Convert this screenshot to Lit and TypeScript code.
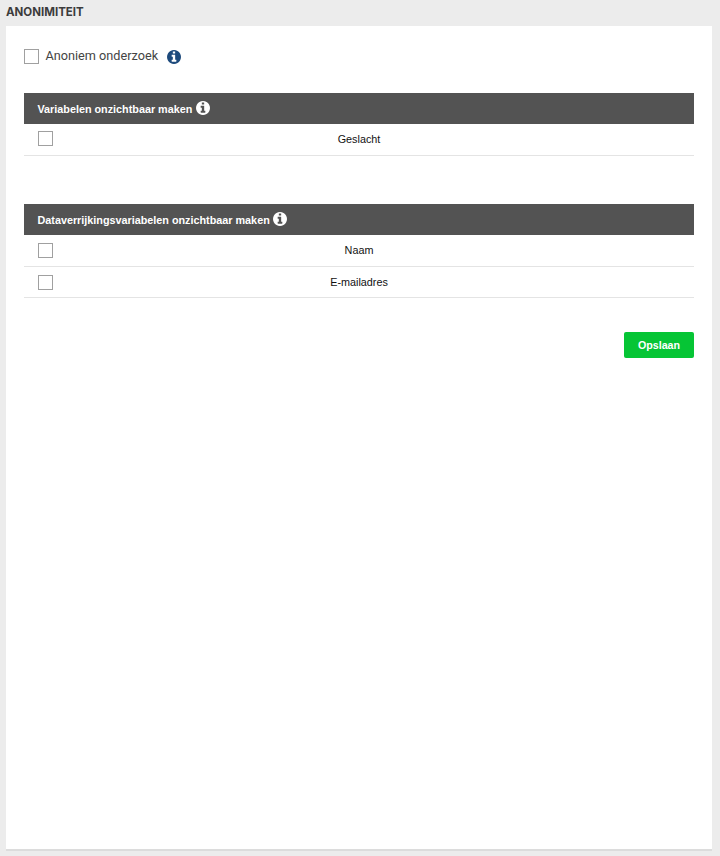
import { LitElement, html, css, svg } from 'lit';
import { customElement } from 'lit/decorators.js';

const infoIcon = (cls: string) => html`<svg class=${cls} viewBox="128 128 1536 1536">
  ${svg`<path fill="currentColor" d="M1152 1376v-160q0-14-9-23t-23-9h-96v-512q0-14-9-23t-23-9h-320q-14 0-23 9t-9 23v160q0 14 9 23t23 9h96v320h-96q-14 0-23 9t-9 23v160q0 14 9 23t23 9h448q14 0 23-9t9-23zm-128-896v-160q0-14-9-23t-23-9h-192q-14 0-23 9t-9 23v160q0 14 9 23t23 9h192q14 0 23-9t9-23zm640 416q0 209-103 385.5t-279.5 279.5-385.5 103-385.5-103-279.5-279.5-103-385.5 103-385.5 279.5-279.5 385.5-103 385.5 103 279.5 279.5 103 385.5z"></path>`}
</svg>`;

@customElement('app-root')
export class AppRoot extends LitElement {
  static styles = css`
    :host {
      display: block;
      height: 856px;
      background: #ececec;
      font-family: 'Liberation Sans', Arial, sans-serif;
      overflow: hidden;
    }
    .title {
      height: 26px;
      padding: 5px 0 0 6px;
      box-sizing: border-box;
      font-family: Inter, sans-serif;
      font-size: 11.5px;
      line-height: 14px;
      font-weight: 700;
      color: #3c3c3c;
    }
    .card {
      margin: 0 8px 0 6px;
      height: 823px;
      padding: 23px 18px 0;
      box-sizing: border-box;
      background: #fff;
      box-shadow: 0 2px 0 #dcdcdc;
    }
    .box {
      display: block;
      width: 15px;
      height: 15px;
      box-sizing: border-box;
      border: 1px solid #a0a0a0;
      background: #fff;
    }
    .anon {
      display: flex;
      align-items: center;
      height: 15px;
      color: #444;
      font-family: Roboto, sans-serif;
      font-size: 12.7px;
    }
    .anon span {
      margin-left: 6.5px;
      margin-top: -2px;
    }
    .anon-icon {
      width: 14px;
      height: 14px;
      margin-left: 9px;
      color: #1d4a7c;
    }
    .group {
      margin-top: 29px;
    }
    .group + .group {
      margin-top: 48px;
    }
    .head {
      display: flex;
      align-items: center;
      height: 31px;
      padding-left: 13.5px;
      background: #535353;
      color: #fff;
      font-size: 10.8px;
      font-weight: 700;
    }
    .head-icon {
      width: 14px;
      height: 14px;
      margin-left: 3.5px;
      margin-top: -1px;
      color: #fff;
    }
    .row {
      display: grid;
      grid-template-columns: 1fr auto 1fr;
      align-items: center;
      height: 32px;
      box-sizing: border-box;
      padding: 0 0 2px 14px;
      border-bottom: 1px solid #e4e4e4;
      color: #111;
      font-size: 10.8px;
    }
    .group + .group .box {
      margin-top: 2px;
    }
    .group + .group .row:last-child {
      height: 31px;
      padding-bottom: 1px;
    }
    .row .name {
      position: relative;
      left: -7px;
    }
    .actions {
      display: flex;
      justify-content: flex-end;
      margin-top: 34px;
    }
    button {
      width: 70px;
      height: 26px;
      padding: 0;
      border: none;
      border-radius: 2px;
      background: #06c535;
      color: #fff;
      font-family: 'Liberation Sans', Arial, sans-serif;
      font-size: 10.7px;
      font-weight: 700;
    }
  `;

  private group(title: string, rows: string[]) {
    return html`<div class="group">
      <div class="head">${title}${infoIcon('head-icon')}</div>
      ${rows.map(
        (r) => html`<div class="row">
          <i class="box"></i>
          <span class="name">${r}</span>
        </div>`,
      )}
    </div>`;
  }

  render() {
    return html`
      <div class="title">ANONIMITEIT</div>
      <div class="card">
        <div class="anon">
          <i class="box"></i>
          <span>Anoniem onderzoek</span>
          ${infoIcon('anon-icon')}
        </div>
        ${this.group('Variabelen onzichtbaar maken', ['Geslacht'])}
        ${this.group('Dataverrijkingsvariabelen onzichtbaar maken', ['Naam', 'E-mailadres'])}
        <div class="actions"><button>Opslaan</button></div>
      </div>
    `;
  }
}
